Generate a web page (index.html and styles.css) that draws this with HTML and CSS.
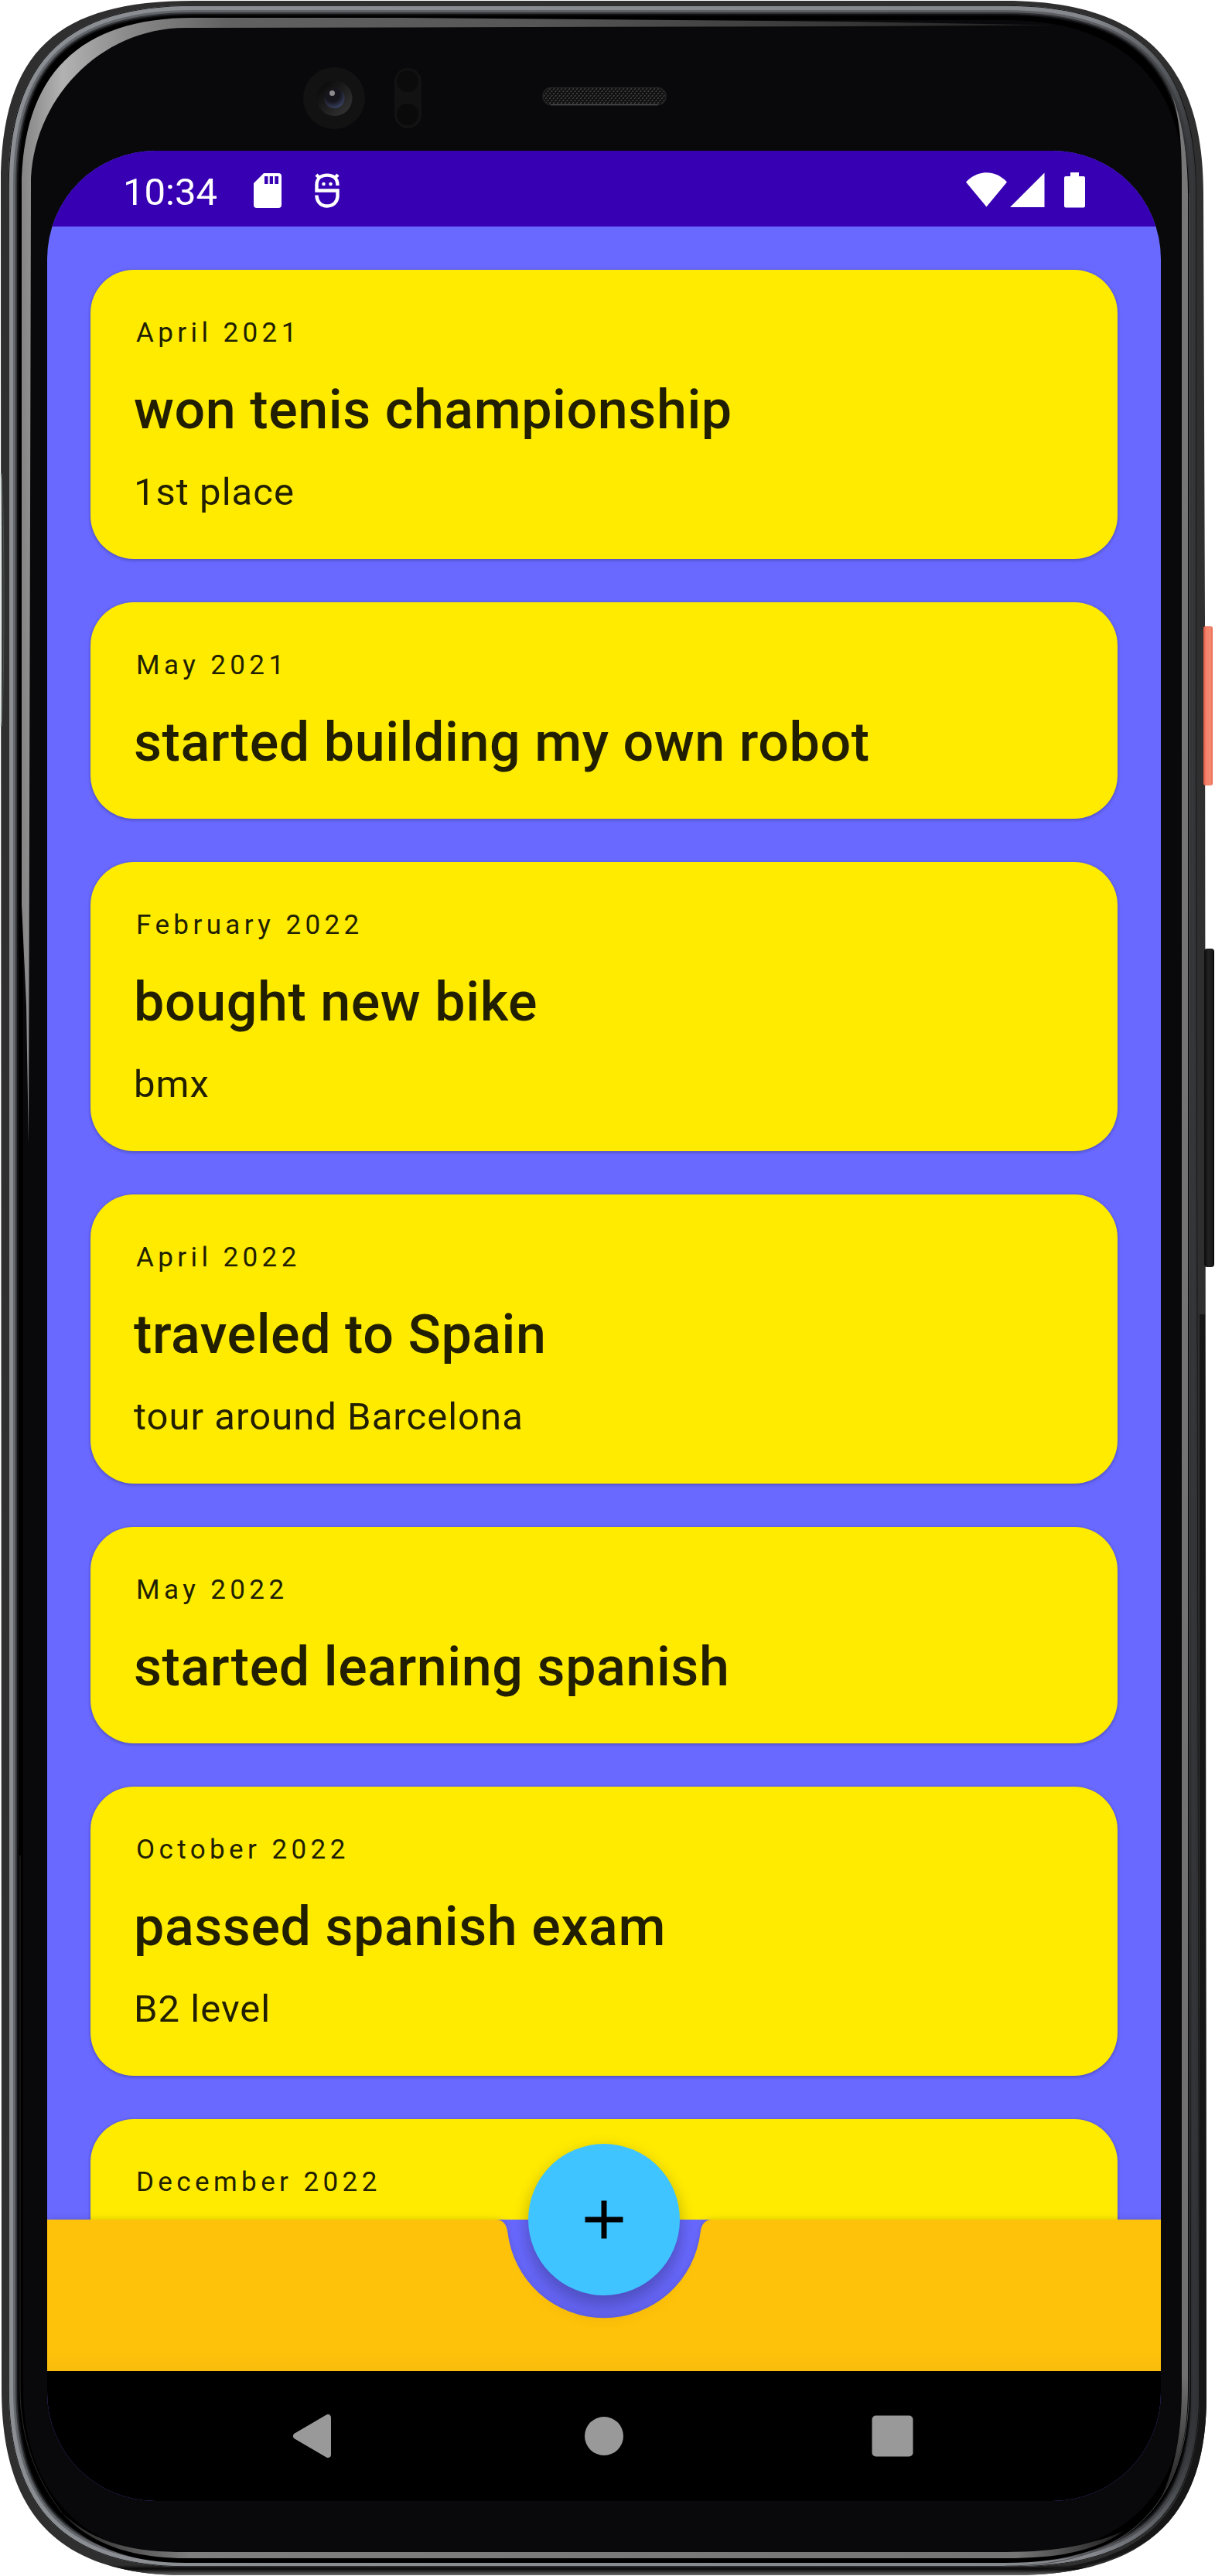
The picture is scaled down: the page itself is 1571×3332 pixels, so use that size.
FILE: index.html
```html
<!DOCTYPE html>
<html lang="en">
<head>
<meta charset="utf-8">
<title>Timeline</title>
<link rel="stylesheet" href="styles.css">
</head>
<body>
<div class="phone">
  <svg class="frame" viewBox="0 0 1571 3332" aria-hidden="true">
    <defs>
      <linearGradient id="rim" gradientUnits="userSpaceOnUse" x1="0" y1="0" x2="1571" y2="0">
        <stop offset="0" stop-color="#8b8e93"/><stop offset=".9" stop-color="#84878b"/><stop offset=".96" stop-color="#55585c"/><stop offset=".985" stop-color="#303235"/>
      </linearGradient>
      <linearGradient id="rimMid" gradientUnits="userSpaceOnUse" x1="0" y1="0" x2="1571" y2="0">
        <stop offset="0" stop-color="#63666b"/><stop offset=".9" stop-color="#5b5d61"/><stop offset=".96" stop-color="#434548"/><stop offset=".985" stop-color="#303235"/>
      </linearGradient>
      <linearGradient id="rimDeep" gradientUnits="userSpaceOnUse" x1="0" y1="0" x2="1571" y2="0">
        <stop offset="0" stop-color="#34363a"/><stop offset=".95" stop-color="#2c2e31"/><stop offset="1" stop-color="#2e3033"/>
      </linearGradient>
      <linearGradient id="glint" gradientUnits="userSpaceOnUse" x1="28" y1="0" x2="1360" y2="0">
        <stop offset="0" stop-color="#858585"/><stop offset=".04" stop-color="#b2b2b2"/><stop offset=".1" stop-color="#8c8c8c"/><stop offset=".2" stop-color="#616161"/><stop offset=".5" stop-color="#565656"/><stop offset="1" stop-color="#222"/>
      </linearGradient>
      <linearGradient id="chin" gradientUnits="userSpaceOnUse" x1="80" y1="0" x2="1453" y2="0">
        <stop offset="0" stop-color="#222"/><stop offset=".12" stop-color="#7f7f7f"/><stop offset=".9" stop-color="#757575"/><stop offset="1" stop-color="#1c1c1c"/>
      </linearGradient>
      <linearGradient id="edge" gradientUnits="userSpaceOnUse" x1="0" y1="3318" x2="0" y2="3332">
        <stop offset="0" stop-color="#000" stop-opacity="0"/><stop offset=".35" stop-color="#0a0a0a"/><stop offset="1" stop-color="#777"/>
      </linearGradient>
      <linearGradient id="sideFade" x1="0" y1="0" x2="0" y2="1">
        <stop offset="0" stop-color="#777"/><stop offset=".95" stop-color="#707070"/><stop offset="1" stop-color="#222"/>
      </linearGradient>
      <linearGradient id="coral" x1="0" y1="0" x2="1" y2="0">
        <stop offset="0" stop-color="#d9563f"/><stop offset=".3" stop-color="#f5826b"/><stop offset=".75" stop-color="#f58a72"/><stop offset="1" stop-color="#e8654a"/>
      </linearGradient>
      <linearGradient id="rocker" x1="0" y1="0" x2="1" y2="0">
        <stop offset="0" stop-color="#0a0a0a"/><stop offset=".4" stop-color="#222"/><stop offset=".8" stop-color="#1a1a1a"/><stop offset="1" stop-color="#000"/>
      </linearGradient>
      <radialGradient id="lens" cx=".4" cy=".3" r=".75">
        <stop offset="0" stop-color="#17141a"/><stop offset=".5" stop-color="#15151d"/><stop offset="1" stop-color="#3c4668"/>
      </radialGradient>
      <linearGradient id="ring" x1="0" y1="0" x2="1" y2="1">
        <stop offset=".2" stop-color="#0e0e0e"/><stop offset="1" stop-color="#383838"/>
      </linearGradient>
      <pattern id="mesh" width="5" height="6" patternUnits="userSpaceOnUse">
        <rect width="5" height="6" fill="#111"/><path d="M0 1.5L2 .5M2.500 4.500L4.500 3.500" stroke="#555" stroke-width="1.100"/>
      </pattern>
      <clipPath id="rimClip"><path d="M11 240C11 73 91 7 250 7H1300C1475 7 1547 85 1547 250V1000L1551 3095C1551 3256 1470 3320 1310 3320H240C85 3320 11 3245 11 3090Z"/></clipPath>
    </defs>
    <path d="M1 240C1 65 75 1 250 1H1300C1480 1 1556 85 1556 250L1558 800L1560 3100C1560 3255 1483 3331 1310 3331H240C77 3331 2 3253 2 3090Z" fill="#2f2f2f"/>
    <path d="M2 3090C2 3253 77 3331 240 3331H1310C1483 3331 1560 3255 1560 3100L1551 3095C1551 3256 1470 3320 1310 3320H240C85 3320 11 3245 11 3090Z" fill="url(#edge)"/>
    <path d="M1551 1700V3100C1551 3256 1470 3325 1310 3325C1483 3331 1560 3255 1560 3100L1558 1700Z" fill="#161617"/>
    <rect x="1556" y="810" width="12" height="206" rx="3" fill="url(#coral)"/>
    <rect x="1557" y="1227" width="13" height="412" rx="4" fill="url(#rocker)"/>
    <g clip-path="url(#rimClip)" fill="none">
      <path d="M11 240C11 73 91 7 250 7H1300C1475 7 1547 85 1547 250V1000L1551 3095C1551 3256 1470 3320 1310 3320H240C85 3320 11 3245 11 3090Z" fill="#000" stroke="#0f1011" stroke-width="26"/>
      <path d="M11 240C11 73 91 7 250 7H1300C1475 7 1547 85 1547 250V1000L1551 3095C1551 3256 1470 3320 1310 3320H240C85 3320 11 3245 11 3090Z" stroke="url(#rimDeep)" stroke-width="22"/>
      <path d="M11 240C11 73 91 7 250 7H1300C1475 7 1547 85 1547 250V1000L1551 3095C1551 3256 1470 3320 1310 3320H240C85 3320 11 3245 11 3090Z" stroke="url(#rimMid)" stroke-width="18"/>
      <path d="M11 240C11 73 91 7 250 7H1300C1475 7 1547 85 1547 250V1000L1551 3095C1551 3256 1470 3320 1310 3320H240C85 3320 11 3245 11 3090Z" stroke="url(#rim)" stroke-width="12"/>
      <path d="M11 240C11 73 91 7 250 7H1300C1475 7 1547 85 1547 250V1000L1551 3095C1551 3256 1470 3320 1310 3320H240C85 3320 11 3245 11 3090Z" stroke="#111" stroke-width="1.500"/>
    </g>
    <path d="M25 245C25 90 98 21 250 21H1300C1460 21 1537 105 1537 250V3095C1537 3240 1460 3315 1300 3315H240C100 3315 25 3235 25 3090Z" fill="#000"/>
    <path d="M30 245C30 94 101 26 250 26H1300C1455 26 1532 110 1532 250V3090C1532 3225 1450 3307 1300 3307H240C110 3307 30 3225 30 3090Z" fill="#09090b"/>
    <path d="M28 245C28 96 103 23 250 23H520L1100 28L1360 32.500L1100 34L520 35.500L240 36C128 36 40 131 40 240L37 1480L34 1300L28 1170Z" fill="url(#glint)"/>
    <path d="M1513 117C1524 145 1528 180 1528 230V3090C1528 3145 1520 3190 1502 3229C1524 3195 1536 3150 1536 3090V250C1536 200 1528 150 1513 117Z" fill="url(#sideFade)"/>
    <path d="M1537.500 250V3090C1537 3240 1455 3319 1300 3319" fill="none" stroke="#48494b" stroke-width="1"/>
    <path d="M80 3250C125 3292 175 3301 240 3301H1300C1370 3301 1415 3290 1453 3274C1415 3300 1370 3309 1300 3309H240C170 3309 115 3290 80 3250Z" fill="url(#chin)"/>
    <path d="M26 2400V3090C26 3150 45 3205 80 3250" fill="none" stroke="#2b2b2b" stroke-width="1"/>
    <path d="M0 612H1.500C2.500 640 2.500 910 1.500 940H0Z" fill="#dfe5e2"/>
    <path d="M2 612C6 660 6 890 2 940" fill="none" stroke="#4c5551" stroke-width="1"/>

    <circle cx="432" cy="127" r="40" fill="#121212"/>
    <circle cx="432.500" cy="127" r="23" fill="url(#ring)"/>
    <circle cx="432.500" cy="127" r="13" fill="url(#lens)"/>
    <circle cx="429.500" cy="120.500" r="3.500" fill="#8d8b8d"/>
    <rect x="510" y="88" width="35" height="78" rx="17.500" fill="#121213"/>
    <circle cx="527" cy="105" r="14" fill="#0b0b0c"/>
    <circle cx="527" cy="148" r="14" fill="#0a0a0a"/>
    <rect x="702" y="113.500" width="159" height="22" rx="10.500" fill="url(#mesh)" stroke="#222" stroke-width="1.500"/>
    <path d="M712 135.500H851" stroke="#4c4c4c" stroke-width="1.500"/>
  </svg>

  <div class="screen">
    <header class="status-bar">
      <div class="status-group">
        <span class="clock">10:34</span>
        <svg class="icon-sd" viewBox="0 0 36 45" width="36" height="45"><path fill="#fff" fill-rule="evenodd" d="M13 0H32Q36 0 36 4V41Q36 45 32 45H4Q0 45 0 41V13ZM14 4V14H18.500V4ZM20.700 4V14H25V4ZM27.300 4V14H32V4Z"/></svg>
        <svg class="icon-bot" viewBox="0 0 32 45" width="32" height="45"><g fill="none" stroke="#fff" stroke-width="4.400"><path d="M29.500 16C29.500 6.500 24 2.600 16 2.600S2.500 7 2.500 15V22.500H29.500V29C29.500 37 24 42.500 16 42.500S2.500 37 2.500 28.500"/><path d="M2 2L6 6M30 2L26 6"/></g><circle cx="11.500" cy="14" r="2.300" fill="#fff"/><circle cx="20.500" cy="14" r="2.300" fill="#fff"/></svg>
      </div>
      <div class="status-group">
        <svg viewBox="0 0 53 46" width="53" height="46"><path fill="#fff" d="M0 12.500C15 -3.800 38 -3.800 53 12.500L26.500 44.500Z"/></svg>
        <svg class="icon-cell" viewBox="0 0 45 46" width="45" height="46"><path fill="#fff" d="M44.500 .5V45H0Z"/></svg>
        <svg class="icon-battery" viewBox="0 0 27 46" width="27" height="46"><path fill="#fff" d="M8 0H19V5H25Q27 5 27 7V43.500Q27 45.500 25 45.500H2Q0 45.500 0 43.500V7Q0 5 2 5H8Z"/></svg>
      </div>
    </header>

    <main class="timeline">
      <article class="card"><p class="date">April 2021</p><h2 class="title">won tenis championship</h2><p class="note">1st place</p></article>
      <article class="card"><p class="date">May 2021</p><h2 class="title">started building my own robot</h2></article>
      <article class="card"><p class="date">February 2022</p><h2 class="title">bought new bike</h2><p class="note">bmx</p></article>
      <article class="card"><p class="date">April 2022</p><h2 class="title">traveled to Spain</h2><p class="note">tour around Barcelona</p></article>
      <article class="card"><p class="date">May 2022</p><h2 class="title">started learning spanish</h2></article>
      <article class="card"><p class="date">October 2022</p><h2 class="title">passed spanish exam</h2><p class="note">B2 level</p></article>
      <article class="card card-cut"><p class="date">December 2022</p></article>
    </main>

    <div class="bottom-bar">
      <svg class="bar-shape" viewBox="0 0 1440 196" width="1440" height="196">
        <defs><linearGradient id="amber" x1="0" y1="0" x2="0" y2="1"><stop offset=".87" stop-color="#ffc20a"/><stop offset="1" stop-color="#f8bc0c"/></linearGradient></defs>
        <path fill="url(#amber)" d="M0 0H580C589 0 594 6 595.300 16A125.500 125.500 0 0 0 844.700 16C846 6 851 0 860 0H1440V196H0Z"/>
      </svg>
      <button class="fab" aria-label="Add"><svg viewBox="0 0 50 50" width="50" height="50"><path d="M25 .5V49.500M.5 25H49.500" stroke="#000" stroke-width="7"/></svg></button>
    </div>

    <nav class="nav-bar">
      <svg viewBox="0 0 60 60" width="60" height="60"><path d="M5 30L46 6V54Z" fill="#999" stroke="#999" stroke-width="8" stroke-linejoin="round"/></svg>
      <svg viewBox="0 0 60 60" width="60" height="60"><circle cx="30" cy="30" r="25" fill="#999"/></svg>
      <svg viewBox="0 0 60 60" width="60" height="60"><rect x="3.500" y="3.500" width="53" height="53" rx="5" fill="#999"/></svg>
    </nav>
  </div>
</div>
</body>
</html>
```

FILE: styles.css
```css
* { box-sizing: border-box; }

body {
  margin: 0;
  background: #fff;
  font-family: Roboto, "Liberation Sans", sans-serif;
}

svg { display: block; flex: none; }

.phone {
  position: relative;
  width: 1571px;
  height: 3332px;
  padding: 195px 70px 97px 61px;
  overflow: hidden;
}

.frame {
  position: absolute;
  inset: 0;
  width: 1571px;
  height: 3332px;
}

.screen {
  position: relative;
  display: flex;
  flex-direction: column;
  width: 1440px;
  height: 3040px;
  border-radius: 140px;
  overflow: hidden;
  background: #6969ff;
}

.status-bar {
  flex: none;
  display: flex;
  justify-content: space-between;
  height: 98px;
  padding: 28px 98px 0 98px;
  background: #3700b3;
  color: #fff;
}

.status-group { display: flex; align-items: flex-start; }

.clock {
  width: 169px;
  font-size: 49px;
  line-height: 51px;
}

.icon-sd { margin-top: 1px; }
.icon-bot { margin: 1px 0 0 43px; }
.icon-cell { margin-left: 4px; }
.icon-battery { margin-left: 25px; }

.timeline {
  flex: none;
  display: flex;
  flex-direction: column;
  gap: 56px;
  height: 2578px;
  padding: 56px 56px 0;
  overflow: hidden;
}

.card {
  flex: none;
  padding: 57px 56px 58px;
  border-radius: 56px;
  background: #ffeb00;
  color: #211f00;
  box-shadow: 0 2px 4px rgba(0, 0, 0, .18), 0 0 4px rgba(0, 0, 0, .14);
}

.card-cut { height: 280px; }

.date, .title, .note { margin: 0; }

.date {
  padding-left: 3px;
  font-size: 35px;
  line-height: 50px;
  letter-spacing: 5.4px;
}

.title {
  margin-top: 33px;
  font-size: 70px;
  font-weight: 500;
  line-height: 82px;
  letter-spacing: .57px;
}

.note {
  margin: 37px 0 -1px;
  font-size: 49px;
  line-height: 58px;
  letter-spacing: 1.02px;
}

.bottom-bar {
  flex: none;
  position: relative;
  height: 196px;
}

.bar-shape { filter: drop-shadow(0 0 5px rgba(0, 0, 0, .16)); }

.fab {
  position: absolute;
  left: 622px;
  top: -98px;
  display: grid;
  place-items: center;
  width: 196px;
  height: 196px;
  padding: 0;
  border: 0;
  border-radius: 50%;
  background: #40c4ff;
  box-shadow: 0 20px 26px rgba(0, 0, 0, .18), 0 3px 20px rgba(0, 0, 0, .12);
}

.nav-bar {
  flex: none;
  position: relative;
  display: flex;
  align-items: center;
  justify-content: center;
  gap: 313px;
  height: 168px;
  background: #000;
}
```
